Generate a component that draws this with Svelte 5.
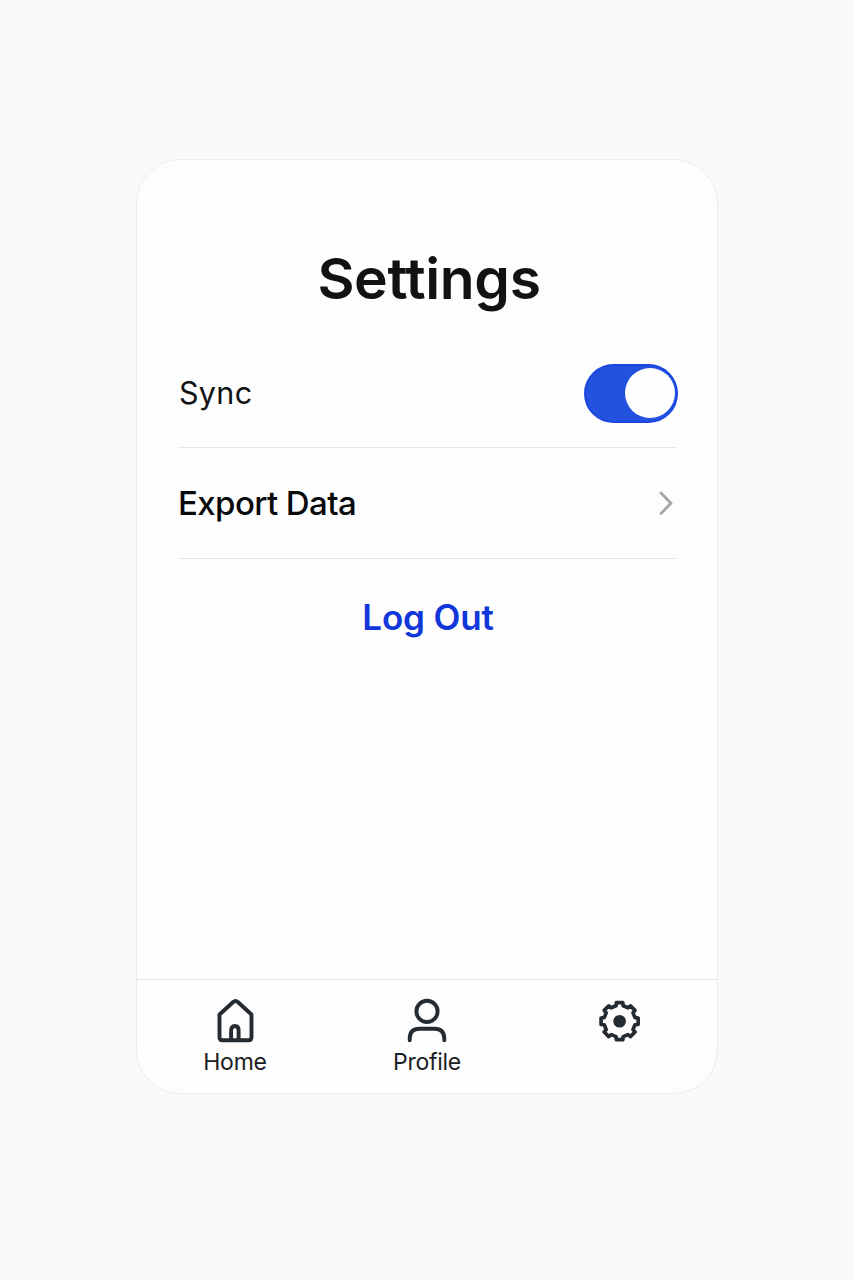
<script>
  let sync = $state(true);

  const tabs = [
    { id: 'home', label: 'Home' },
    { id: 'profile', label: 'Profile' },
    { id: 'settings', label: '' }
  ];

  // Outline of a toothed gear centred on the origin.
  function gear(outer, inner, teeth) {
    const step = (Math.PI * 2) / teeth;
    const points = [];
    for (let i = 0; i < teeth; i++) {
      const a = i * step;
      for (const [r, o] of [[inner, -0.29], [outer, -0.22], [outer, 0.22], [inner, 0.29]]) {
        const t = a + o * step;
        points.push(`${(Math.cos(t) * r).toFixed(2)} ${(Math.sin(t) * r).toFixed(2)}`);
      }
    }
    return `M${points.join('L')}Z`;
  }
</script>

<main>
  <section class="card">
    <h1>Settings</h1>
    <div class="row">
      <span class="sync">Sync</span>
      <button class="toggle" class:on={sync} role="switch" aria-checked={sync} aria-label="Sync" onclick={() => (sync = !sync)}>
        <span class="knob"></span>
      </button>
    </div>
    <div class="row export-row">
      <span class="export">Export Data</span>
      <svg class="chevron" width="16" height="26" viewBox="0 0 16 26"><path d="M2 3L12 13.2L2 23.5" /></svg>
    </div>
    <button class="logout"><span>Log Out</span></button>
    <nav>
      {#each tabs as tab (tab.id)}
        <div class="tab">
          <svg width="46" height="46" viewBox="-23 -23 46 46">
            {#if tab.id === 'home'}
              <path d="M-15.5 -6.5L-1.8 -19Q.5 -21 2.8 -19L16.5 -6.5V16.2Q16.5 19.2 13.5 19.2H-12.5Q-15.5 19.2 -15.5 16.2Z" />
              <path d="M-3.9 18V9.5Q-3.9 5 -.2 5Q3.6 5 3.6 9.5V18" />
            {:else if tab.id === 'profile'}
              <circle cx="0" cy="-9.6" r="10.6" />
              <path d="M-17.3 19.2V17.7Q-17.3 7.7 -7.5 7.7H7.5Q17.3 7.7 17.3 17.7V19.2" />
            {:else}
              <g transform="translate(.6 .2)">
                <path class="gear" d={gear(18.8, 15.8, 8)} />
                <circle class="hub" cx="0" cy="0" r="6.3" />
              </g>
            {/if}
          </svg>
          {#if tab.label}<span class={tab.id}>{tab.label}</span>{/if}
        </div>
      {/each}
    </nav>
  </section>
</main>

<style>
  :global(body) {
    margin: 0;
    background: #fafafa;
  }
  main {
    box-sizing: border-box;
    height: 1280px;
    padding: 159px 0 0 136px;
    font-family: Inter, "Liberation Sans", sans-serif;
    color: #111214;
  }
  .card {
    box-sizing: border-box;
    display: flex;
    flex-direction: column;
    width: 582px;
    height: 935px;
    border: 1px solid #ececec;
    border-radius: 44px;
    background: #fdfdfd;
    overflow: hidden;
  }
  h1 {
    margin: 79px 0 0 4px;
    height: 80px;
    line-height: 80px;
    font-size: 57px;
    font-weight: 600;
    letter-spacing: -0.35px;
    text-align: center;
  }
  .row {
    box-sizing: border-box;
    display: flex;
    align-items: center;
    justify-content: space-between;
    height: 109px;
    margin: 20px 41px 0 41px;
    border-bottom: 1px solid #e6e6e6;
    white-space: nowrap;
  }
  .export-row {
    height: 111px;
    margin-top: 0;
    color: #08090a;
  }
  .sync {
    margin: 0 0 2px 1px;
    font-size: 30.5px;
    letter-spacing: 0.3px;
  }
  .export {
    font-size: 33px;
    font-weight: 500;
    letter-spacing: -0.6px;
  }
  button {
    border: 0;
    padding: 0;
    font: inherit;
    background: none;
  }
  .toggle {
    box-sizing: border-box;
    display: flex;
    align-items: center;
    width: 94px;
    height: 59px;
    margin-right: -2px;
    padding: 0 3px;
    border-radius: 30px;
    background: #c9ccd1;
  }
  .toggle.on {
    justify-content: flex-end;
    background: #2352df;
    border: 2px solid #1b47e0;
    padding: 0 1px;
  }
  .knob {
    width: 50px;
    height: 50px;
    border-radius: 50%;
    background: #fefefe;
  }
  .chevron {
    margin-right: 1px;
    fill: none;
    stroke: #a6a6a6;
    stroke-width: 2.8;
    stroke-linecap: round;
    stroke-linejoin: round;
  }
  .logout {
    height: 60px;
    margin: 28px 0 0 2px;
    line-height: 60px;
    font-size: 35px;
    font-weight: 600;
    letter-spacing: -0.15px;
    color: #1136da;
  }
  nav {
    box-sizing: border-box;
    display: flex;
    height: 114px;
    margin-top: auto;
    padding: 18px 0 0 2px;
    border-top: 1px solid #e6e6e6;
  }
  .tab {
    display: flex;
    flex-direction: column;
    align-items: center;
    width: 192px;
    font-size: 23px;
    line-height: 36px;
    letter-spacing: -0.25px;
    color: #1b1e22;
  }
  .tab svg {
    display: block;
    fill: none;
    stroke: #242b31;
    stroke-width: 3.9;
    stroke-linecap: round;
    stroke-linejoin: round;
  }
  .tab .gear {
    stroke-width: 3.7;
  }
  .tab .hub {
    fill: #242b31;
    stroke: none;
  }
</style>
